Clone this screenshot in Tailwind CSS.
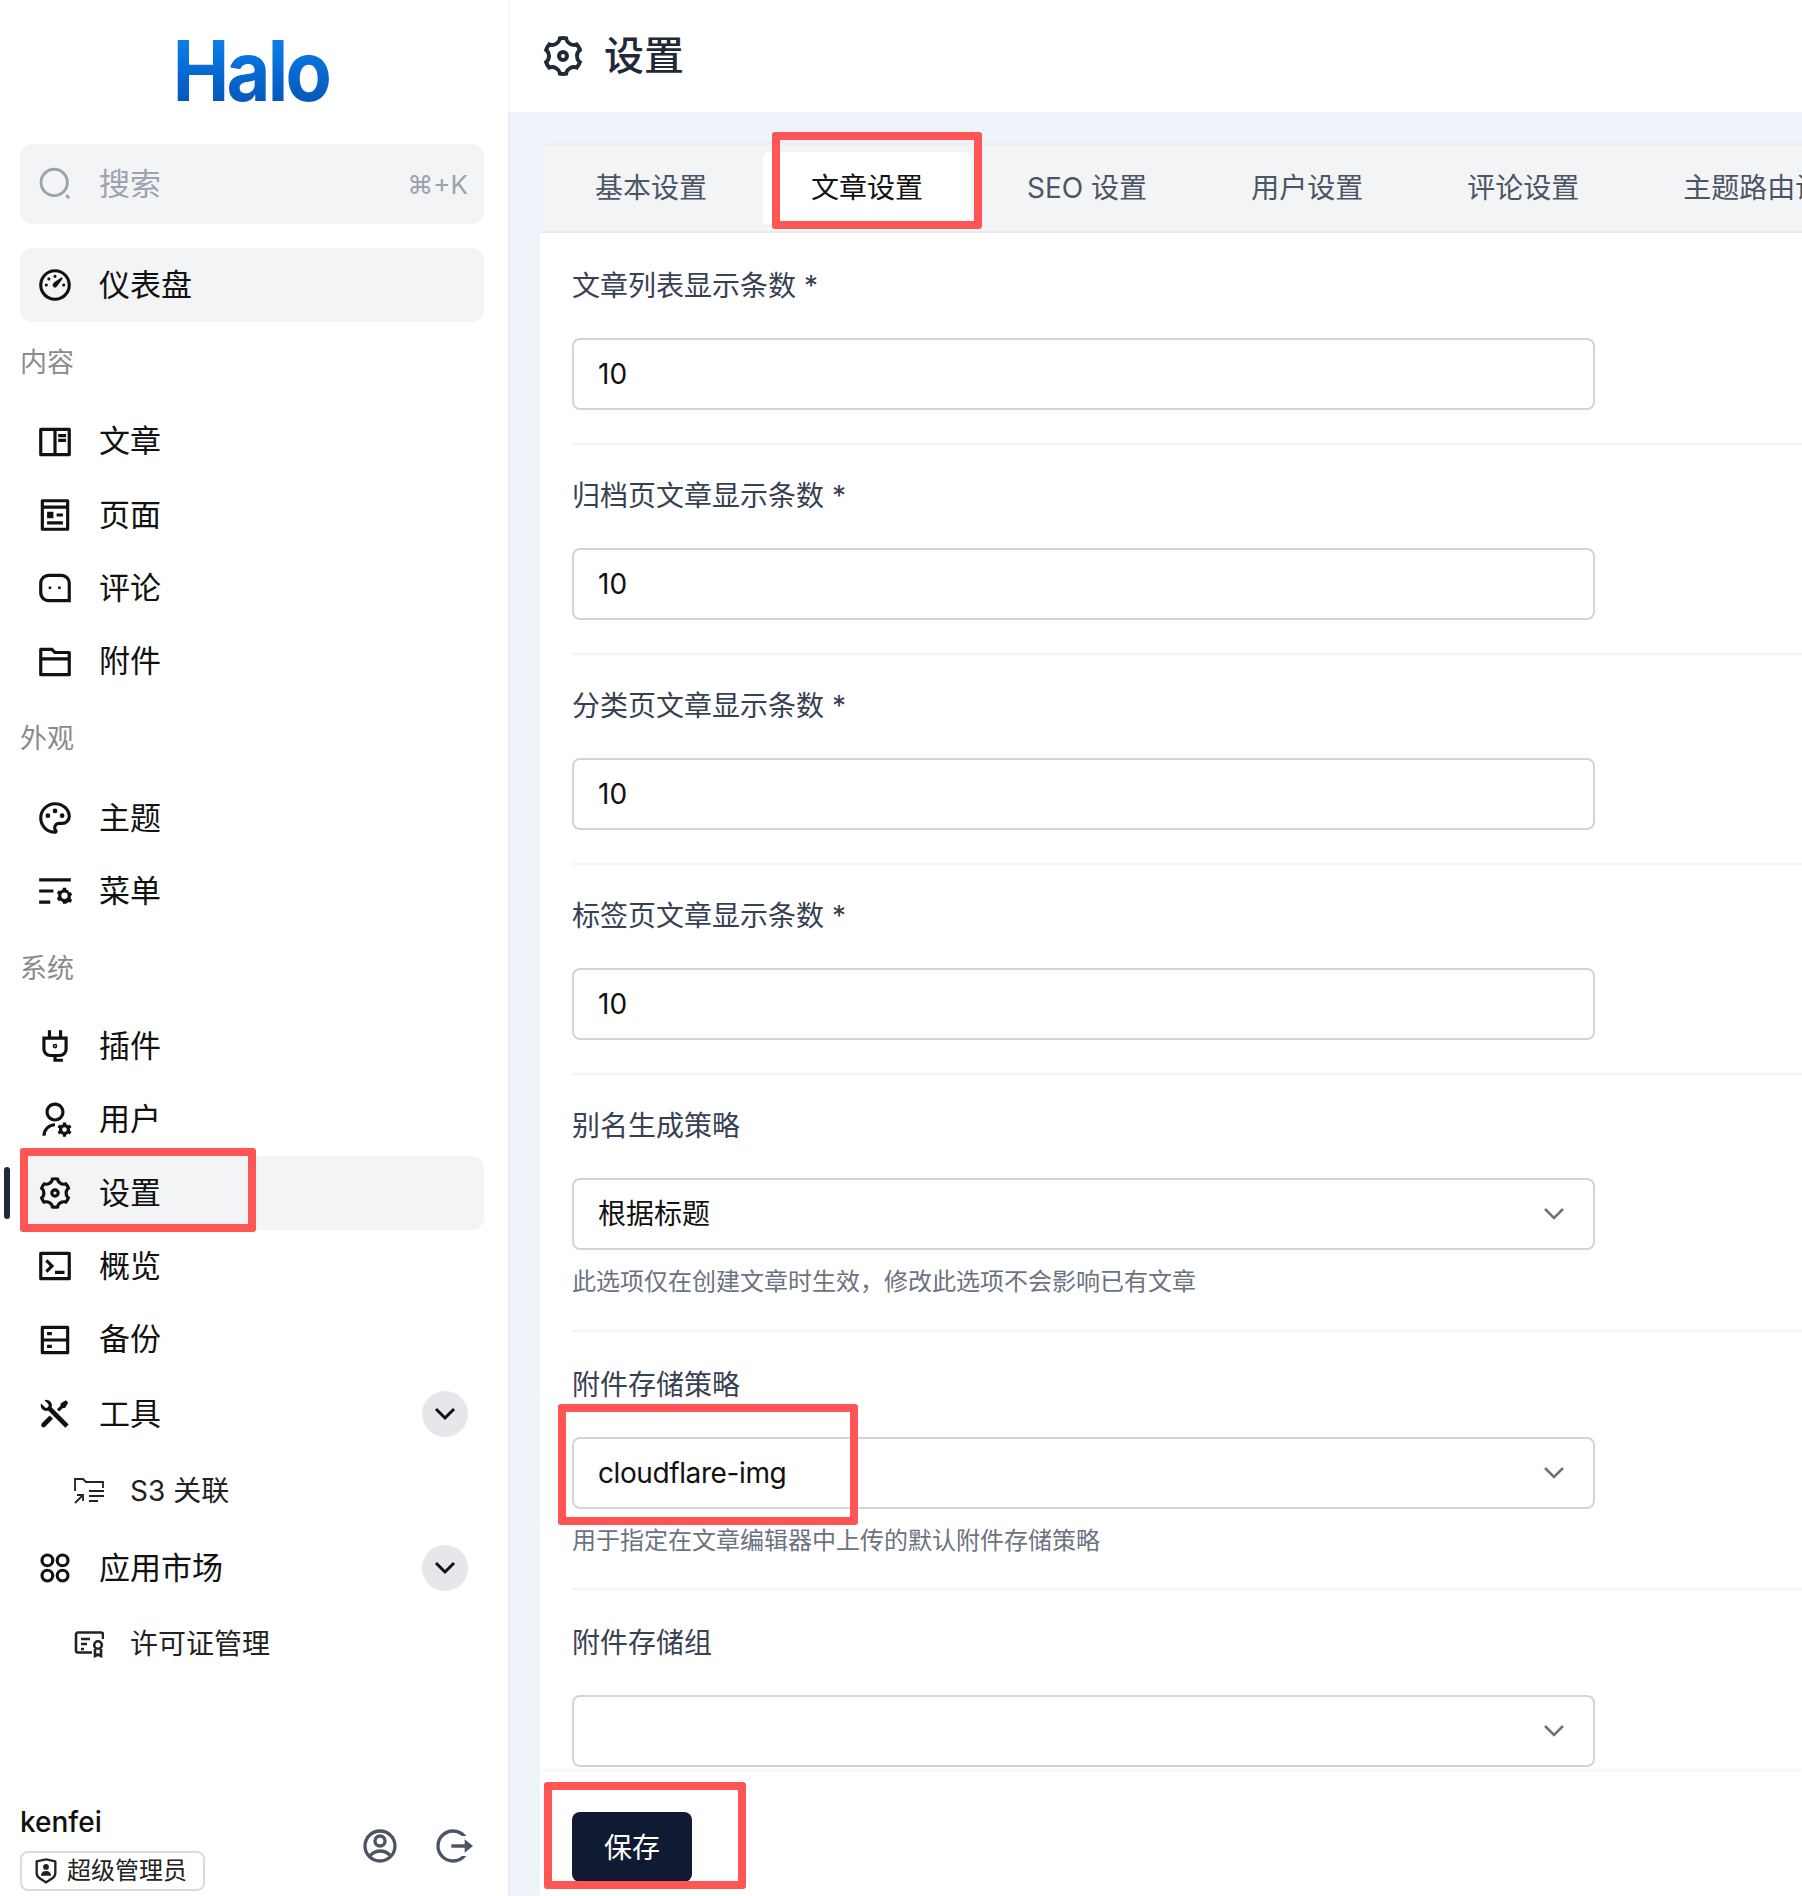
<!DOCTYPE html>
<html lang="zh-CN">
<head>
  <meta charset="UTF-8" />
  <title>设置 - Halo</title>
  <script src="https://cdn.jsdelivr.net/npm/@tailwindcss/browser@4"></script>
</head>
<body class="relative flex h-[1896px] w-[1802px] overflow-hidden bg-white font-[Inter,'Noto_Sans_CJK_SC','DejaVu_Sans',sans-serif] text-[#111]">

  <!-- Sidebar -->
  <aside class="relative z-10 flex w-[508px] shrink-0 flex-col bg-white shadow-[1px_0_3px_rgba(0,0,0,0.06)]">
    <div class="flex h-[144px] shrink-0 items-start justify-center pt-[25px] pr-[7px]">
      <span class="inline-block origin-center scale-x-[0.9] bg-linear-to-b from-[#0f86f8] to-[#0450ae] bg-clip-text text-[84px] leading-[92px] font-bold tracking-[-3px] text-transparent">Halo</span>
    </div>

    <div class="mr-6 ml-5 flex h-[80px] shrink-0 items-center gap-[25px] rounded-xl bg-[#f3f4f6] pr-4 pl-4 text-[31px] text-[#9ca3af]">
      <svg class="h-[38px] w-[38px] shrink-0" viewBox="0 0 24 24" fill="none" stroke="currentColor" stroke-width="1.8"><circle cx="11.5" cy="11" r="8.300"/><path d="M19 19l2 2"/></svg>
      <span>搜索</span>
      <span class="ml-auto text-[26px]">⌘+K</span>
    </div>

    <div class="mt-6 mr-6 ml-5 flex h-[74px] shrink-0 items-center gap-[25px] rounded-xl bg-[#f3f4f6] pl-4 text-[31px]">
      <svg class="h-[38px] w-[38px] shrink-0" viewBox="0 0 24 24" fill="currentColor"><path d="M12 2c5.523 0 10 4.477 10 10s-4.477 10-10 10S2 17.523 2 12 6.477 2 12 2zm0 2a8 8 0 1 0 0 16 8 8 0 0 0 0-16zm3.833 3.337a.596.596 0 0 1 .763.067.59.59 0 0 1 .063.76c-2.18 3.046-3.38 4.678-3.598 4.897a1.5 1.5 0 0 1-2.122-2.122c.374-.373 2.005-1.574 4.894-3.602zM17.5 11a1 1 0 1 1 0 2 1 1 0 0 1 0-2zm-11 0a1 1 0 1 1 0 2 1 1 0 0 1 0-2zm2.318-3.596a1 1 0 1 1-1.414 1.414 1 1 0 0 1 1.414-1.414zM12 5.5a1 1 0 1 1 0 2 1 1 0 0 1 0-2z"/></svg>
      <span>仪表盘</span>
    </div>

    <div class="flex h-[83px] shrink-0 items-center pl-5 text-[27px] text-[#8c8a8a]">内容</div>
    <div class="mr-6 ml-5 flex h-[73.3px] shrink-0 items-center gap-[25px] pl-4 text-[31px]">
      <svg class="h-[38px] w-[38px] shrink-0" viewBox="0 0 24 24" fill="currentColor"><path d="M2 3.993A1 1 0 0 1 2.992 3h18.016c.548 0 .992.445.992.993v16.014a1 1 0 0 1-.992.993H2.992A1 1 0 0 1 2 20.007V3.993zM11 5H4v14h7V5zm2 0v14h7V5h-7zm1 2h5v2h-5V7zm0 3h5v2h-5v-2z"/></svg>
      <span>文章</span>
    </div>
    <div class="mr-6 ml-5 flex h-[73.3px] shrink-0 items-center gap-[25px] pl-4 text-[31px]">
      <svg class="h-[38px] w-[38px] shrink-0" viewBox="0 0 24 24" fill="currentColor"><path d="M5 8v12h14V8H5zm0-2h14V4H5v2zm15 16H4a1 1 0 0 1-1-1V3a1 1 0 0 1 1-1h16a1 1 0 0 1 1 1v18a1 1 0 0 1-1 1zM7 10h4v4H7v-4zm0 6h10v2H7v-2zm6-5h4v2h-4v-2z"/></svg>
      <span>页面</span>
    </div>
    <div class="mr-6 ml-5 flex h-[73.3px] shrink-0 items-center gap-[25px] pl-4 text-[31px]">
      <svg class="h-[38px] w-[38px] shrink-0" viewBox="0 0 24 24" fill="currentColor"><path d="M2 8.994A5.99 5.99 0 0 1 8 3h8c3.313 0 6 2.695 6 5.994V21H8c-3.313 0-6-2.695-6-5.994V8.994zM20 19V8.994A4.004 4.004 0 0 0 16 5H8a3.99 3.99 0 0 0-4 3.994v6.012A4.004 4.004 0 0 0 8 19h12zm-6-8h1.600v1.600H14V11zm-6 0h1.600v1.600H8V11z"/></svg>
      <span>评论</span>
    </div>
    <div class="mr-6 ml-5 flex h-[73.3px] shrink-0 items-center gap-[25px] pl-4 text-[31px]">
      <svg class="h-[38px] w-[38px] shrink-0" viewBox="0 0 24 24" fill="currentColor" fill-rule="evenodd"><path d="M2 4a1 1 0 0 1 1-1h7.414l2 2H21a1 1 0 0 1 1 1v14a1 1 0 0 1-1 1H3a1 1 0 0 1-1-1V4zm2 1v4h16V7h-8.414l-2-2H4zm0 6v8h16v-8H4z"/></svg>
      <span>附件</span>
    </div>

    <div class="flex h-[83px] shrink-0 items-center pl-5 text-[27px] text-[#8c8a8a]">外观</div>
    <div class="mr-6 ml-5 flex h-[73.3px] shrink-0 items-center gap-[25px] pl-4 text-[31px]">
      <svg class="h-[38px] w-[38px] shrink-0" viewBox="0 0 24 24" fill="currentColor"><path d="M12 2c5.522 0 10 3.978 10 8.889a5.558 5.558 0 0 1-5.556 5.555h-1.966c-.922 0-1.667.745-1.667 1.667 0 .422.167.811.422 1.1.267.3.434.689.434 1.122C13.667 21.256 12.9 22 12 22 6.478 22 2 17.522 2 12S6.478 2 12 2zm-1.189 16.111a3.664 3.664 0 0 1 3.667-3.667h1.966A3.558 3.558 0 0 0 20 10.89C20 7.139 16.468 4 12 4a8 8 0 0 0-.676 15.972 3.648 3.648 0 0 1-.513-1.86zM7.5 12a1.5 1.5 0 1 1 0-3 1.5 1.5 0 0 1 0 3zm9 0a1.5 1.5 0 1 1 0-3 1.5 1.5 0 0 1 0 3zM12 9a1.5 1.5 0 1 1 0-3 1.5 1.5 0 0 1 0 3z"/></svg>
      <span>主题</span>
    </div>
    <div class="mr-6 ml-5 flex h-[73.3px] shrink-0 items-center gap-[25px] pl-4 text-[31px]">
      <svg class="h-[38px] w-[38px] shrink-0" viewBox="0 0 24 24" fill="currentColor"><path d="M2 18h7v2H2v-2zm0-7h9v2H2v-2zm0-7h20v2H2V4zm18.674 9.025l1.156-.391 1 1.732-.916.805a4.017 4.017 0 0 1 0 1.658l.916.805-1 1.732-1.156-.391c-.41.37-.898.655-1.435.83L19 20h-2l-.24-1.196a3.996 3.996 0 0 1-1.434-.83l-1.156.392-1-1.732.916-.805a4.017 4.017 0 0 1 0-1.658l-.916-.805 1-1.732 1.156.391c.41-.37.898-.655 1.435-.83L17 10h2l.24 1.196c.536.174 1.024.46 1.434.83zM18 17a2 2 0 1 0 0-4 2 2 0 0 0 0 4z"/></svg>
      <span>菜单</span>
    </div>

    <div class="flex h-[82px] shrink-0 items-center pl-5 text-[27px] text-[#8c8a8a]">系统</div>
    <div class="mr-6 ml-5 flex h-[73.3px] shrink-0 items-center gap-[25px] pl-4 text-[31px]">
      <svg class="h-[38px] w-[38px] shrink-0" viewBox="0 0 24 24" fill="none" stroke="currentColor" stroke-width="2"><path d="M8.500 2v5M15.500 2v5M4 7h16M5 7v7a4 4 0 0 0 4 4h6a4 4 0 0 0 4-4V7M12 18v3h5"/><circle cx="12" cy="12" r=".5"/></svg>
      <span>插件</span>
    </div>
    <div class="mr-6 ml-5 flex h-[73.3px] shrink-0 items-center gap-[25px] pl-4 text-[31px]">
      <svg class="h-[38px] w-[38px] shrink-0" viewBox="0 0 24 24" fill="currentColor"><path d="M12 14v2a6 6 0 0 0-6 6H4a8 8 0 0 1 8-8zm0-1c-3.315 0-6-2.685-6-6s2.685-6 6-6 6 2.685 6 6-2.685 6-6 6zm0-2c2.21 0 4-1.79 4-4s-1.79-4-4-4-4 1.79-4 4 1.79 4 4 4zm2.595 7.812a3.51 3.51 0 0 1 0-1.623l-.992-.573 1-1.732.992.573A3.496 3.496 0 0 1 17 14.645V13.5h2v1.145c.532.158 1.012.44 1.405.812l.992-.573 1 1.732-.992.573a3.51 3.51 0 0 1 0 1.622l.992.573-1 1.732-.992-.573a3.496 3.496 0 0 1-1.405.812V22.5h-2v-1.145a3.496 3.496 0 0 1-1.405-.812l-.992.573-1-1.732.992-.572zM18 19.5a1.5 1.5 0 1 0 0-3 1.5 1.5 0 0 0 0 3z"/></svg>
      <span>用户</span>
    </div>
    <div class="relative mr-6 ml-5 flex h-[73.3px] shrink-0 items-center gap-[25px] rounded-xl bg-[#f3f4f6] pl-4 text-[31px]">
      <span class="absolute top-[11px] -left-4 h-[52px] w-[6px] rounded-full bg-[#1e293b]"></span>
      <svg class="h-[38px] w-[38px] shrink-0" viewBox="0 0 24 24" fill="currentColor"><path d="M3.34 17a10.018 10.018 0 0 1-.978-2.326 3 3 0 0 0 .002-5.347A9.99 9.99 0 0 1 4.865 4.99a3 3 0 0 0 4.631-2.674 9.99 9.99 0 0 1 5.007.002 3 3 0 0 0 4.632 2.672c.579.59 1.093 1.261 1.525 2.01.433.749.757 1.53.978 2.326a3 3 0 0 0-.002 5.347 9.99 9.99 0 0 1-2.501 4.337 3 3 0 0 0-4.631 2.674 9.99 9.99 0 0 1-5.007-.002 3 3 0 0 0-4.632-2.672A10.018 10.018 0 0 1 3.34 17zm5.66.196a4.993 4.993 0 0 1 2.25 2.77c.499.047 1 .048 1.499.001A4.993 4.993 0 0 1 15 17.197a4.993 4.993 0 0 1 3.525-.565c.29-.408.54-.843.748-1.298A4.993 4.993 0 0 1 18 12c0-1.26.47-2.437 1.273-3.334a8.126 8.126 0 0 0-.75-1.298A4.993 4.993 0 0 1 15 6.804a4.993 4.993 0 0 1-2.25-2.77c-.499-.047-1-.048-1.499-.001A4.993 4.993 0 0 1 9 6.803a4.993 4.993 0 0 1-3.525.565 7.99 7.99 0 0 0-.748 1.298A4.993 4.993 0 0 1 6 12c0 1.26-.47 2.437-1.273 3.334a8.126 8.126 0 0 0 .75 1.298A4.993 4.993 0 0 1 9 17.196zM12 15a3 3 0 1 1 0-6 3 3 0 0 1 0 6zm0-2a1 1 0 1 0 0-2 1 1 0 0 0 0 2z"/></svg>
      <span>设置</span>
    </div>
    <div class="mr-6 ml-5 flex h-[73.3px] shrink-0 items-center gap-[25px] pl-4 text-[31px]">
      <svg class="h-[38px] w-[38px] shrink-0" viewBox="0 0 24 24" fill="currentColor"><path d="M3 3h18a1 1 0 0 1 1 1v16a1 1 0 0 1-1 1H3a1 1 0 0 1-1-1V4a1 1 0 0 1 1-1zm1 2v14h16V5H4zm8 10h6v2h-6v-2zm-3.333-3L5.838 9.172l1.415-1.415L11.495 12l-4.242 4.243-1.415-1.415L8.667 12z"/></svg>
      <span>概览</span>
    </div>
    <div class="mr-6 ml-5 flex h-[73.3px] shrink-0 items-center gap-[25px] pl-4 text-[31px]">
      <svg class="h-[38px] w-[38px] shrink-0" viewBox="0 0 24 24" fill="currentColor"><path d="M5 11h14V5H5v6zm16-7v16a1 1 0 0 1-1 1H4a1 1 0 0 1-1-1V4a1 1 0 0 1 1-1h16a1 1 0 0 1 1 1zm-2 9H5v6h14v-6zM7 15h3v2H7v-2zm0-8h3v2H7V7z"/></svg>
      <span>备份</span>
    </div>
    <div class="mr-6 ml-5 flex h-[76px] shrink-0 items-center gap-[25px] pl-4 text-[31px]">
      <svg class="h-[38px] w-[38px] shrink-0" viewBox="0 0 24 24" fill="currentColor"><path d="M5.33 3.271a3.5 3.5 0 0 1 4.472 4.474L20.647 18.59l-2.122 2.121L7.68 9.867a3.5 3.5 0 0 1-4.472-4.474L5.444 7.63a1.5 1.5 0 1 0 2.121-2.121L5.329 3.27zm10.367 1.884l3.182-1.768 1.414 1.414-1.768 3.182-1.768.354-2.12 2.121-1.415-1.414 2.121-2.121.354-1.768zm-7.071 7.778l2.121 2.122-4.95 4.95A1.5 1.5 0 0 1 3.58 17.99l.071-.07 4.95-4.95z"/></svg>
      <span>工具</span>
      <span class="mr-[16px] ml-auto flex h-[46px] w-[46px] items-center justify-center rounded-full bg-[#e5e7eb]">
        <svg class="h-[24px] w-[24px]" viewBox="0 0 24 24" fill="none" stroke="currentColor" stroke-width="3"><path d="M3 7l9 9 9-9"/></svg>
      </span>
    </div>
    <div class="mr-6 ml-5 flex h-[78px] shrink-0 items-center gap-[26px] pl-[54px] text-[28px] text-[#222]">
      <svg class="h-[28px] w-[30px] shrink-0" viewBox="0 0 30 28" fill="none" stroke="currentColor" stroke-width="1.8"><path d="M1 14V2h8l3 3h17v6M15 14h15M15 19h15M15 24h9M1 26l8-8M3 18h6v6"/></svg>
      <span>S3 关联</span>
    </div>
    <div class="mr-6 ml-5 flex h-[75px] shrink-0 items-center gap-[25px] pl-4 text-[31px]">
      <svg class="h-[38px] w-[38px] shrink-0" viewBox="0 0 24 24" fill="none" stroke="currentColor" stroke-width="2"><circle cx="7.200" cy="7.200" r="3.400"/><circle cx="16.800" cy="7.200" r="3.400"/><circle cx="7.200" cy="16.800" r="3.400"/><circle cx="16.800" cy="16.800" r="3.400"/></svg>
      <span>应用市场</span>
      <span class="mr-[16px] ml-auto flex h-[46px] w-[46px] items-center justify-center rounded-full bg-[#e5e7eb]">
        <svg class="h-[24px] w-[24px]" viewBox="0 0 24 24" fill="none" stroke="currentColor" stroke-width="3"><path d="M3 7l9 9 9-9"/></svg>
      </span>
    </div>
    <div class="mr-6 ml-5 flex h-[78px] shrink-0 items-center gap-[26px] pl-[54px] text-[28px] text-[#222]">
      <svg class="h-[28px] w-[30px] shrink-0" viewBox="0 0 30 28" fill="none" stroke="currentColor" stroke-width="2.6"><path d="M29 9V4.500a2 2 0 0 0-2-2H4a2 2 0 0 0-2 2v16a2 2 0 0 0 2 2h14M7 9h9M7 14h6M7 19h3"/><circle cx="24" cy="15" r="3.800"/><path d="M21 19v7l3-1.500 3 1.500v-7"/></svg>
      <span>许可证管理</span>
    </div>

    <div class="mt-auto flex items-end justify-between px-5 pb-[5px]">
      <div>
        <div class="text-[28px] leading-[36px] font-medium">kenfei</div>
        <div class="mt-[11px] flex h-[40px] w-[185px] items-center gap-[7px] rounded-lg border-2 border-[#d9dbdf] pl-[10px] text-[24px] text-[#222]">
          <svg class="h-[28px] w-[28px] shrink-0" viewBox="0 0 24 24" fill="currentColor"><path d="M3.783 2.826L12 1l8.217 1.826a1 1 0 0 1 .783.976v9.987a6 6 0 0 1-2.672 4.992L12 23l-6.328-4.219A6 6 0 0 1 3 13.79V3.802a1 1 0 0 1 .783-.976zM5 4.604v9.185a4 4 0 0 0 1.781 3.328L12 20.597l5.219-3.48A4 4 0 0 0 19 13.79V4.604L12 3.05 5 4.604zM12 11a2.5 2.5 0 1 1 0-5 2.5 2.5 0 0 1 0 5zm-4.473 5a4.5 4.5 0 0 1 8.946 0H7.527z"/></svg>
          <span>超级管理员</span>
        </div>
      </div>
      <div class="mr-[15px] mb-[25px] flex gap-[33px] text-[#4b5563]">
        <svg class="h-[40px] w-[40px]" viewBox="0 0 24 24" fill="currentColor"><path d="M12 22C6.477 22 2 17.523 2 12S6.477 2 12 2s10 4.477 10 10-4.477 10-10 10zm-4.987-3.744A7.966 7.966 0 0 0 12 20c1.97 0 3.773-.712 5.167-1.892A6.979 6.979 0 0 0 12.16 16a6.981 6.981 0 0 0-5.147 2.256zM5.616 16.820A8.975 8.975 0 0 1 12.160 14a8.972 8.972 0 0 1 6.362 2.634 8 8 0 1 0-12.906.187zM12 13a4 4 0 1 1 0-8 4 4 0 0 1 0 8zm0-2a2 2 0 1 0 0-4 2 2 0 0 0 0 4z"/></svg>
        <svg class="h-[40px] w-[40px]" viewBox="0 0 24 24" fill="currentColor"><path d="M19 11h-8v2h8v3l5-4-5-4v3zm1 7h-2.708a8 8 0 1 1 0-12H20A9.985 9.985 0 0 0 12 2C6.477 2 2 6.477 2 12s4.477 10 10 10a9.985 9.985 0 0 0 8-4z"/></svg>
      </div>
    </div>
  </aside>

  <!-- Main -->
  <main class="flex min-w-0 flex-1 flex-col bg-[#eff4fb]">
    <header class="flex h-[112px] shrink-0 items-center gap-[17px] bg-white pl-[31px] text-[#1f2937]">
      <svg class="h-[48px] w-[48px] shrink-0" viewBox="0 0 24 24" fill="currentColor"><path d="M3.34 17a10.018 10.018 0 0 1-.978-2.326 3 3 0 0 0 .002-5.347A9.99 9.99 0 0 1 4.865 4.99a3 3 0 0 0 4.631-2.674 9.99 9.99 0 0 1 5.007.002 3 3 0 0 0 4.632 2.672c.579.59 1.093 1.261 1.525 2.01.433.749.757 1.53.978 2.326a3 3 0 0 0-.002 5.347 9.99 9.99 0 0 1-2.501 4.337 3 3 0 0 0-4.631 2.674 9.99 9.99 0 0 1-5.007-.002 3 3 0 0 0-4.632-2.672A10.018 10.018 0 0 1 3.34 17zm5.66.196a4.993 4.993 0 0 1 2.25 2.77c.499.047 1 .048 1.499.001A4.993 4.993 0 0 1 15 17.197a4.993 4.993 0 0 1 3.525-.565c.29-.408.54-.843.748-1.298A4.993 4.993 0 0 1 18 12c0-1.26.47-2.437 1.273-3.334a8.126 8.126 0 0 0-.75-1.298A4.993 4.993 0 0 1 15 6.804a4.993 4.993 0 0 1-2.25-2.77c-.499-.047-1-.048-1.499-.001A4.993 4.993 0 0 1 9 6.803a4.993 4.993 0 0 1-3.525.565 7.99 7.99 0 0 0-.748 1.298A4.993 4.993 0 0 1 6 12c0 1.26-.47 2.437-1.273 3.334a8.126 8.126 0 0 0 .75 1.298A4.993 4.993 0 0 1 9 17.196zM12 15a3 3 0 1 1 0-6 3 3 0 0 1 0 6zm0-2a1 1 0 1 0 0-2 1 1 0 0 0 0 2z"/></svg>
      <h1 class="text-[40px] font-medium">设置</h1>
    </header>

    <div class="mt-[31px] ml-[32px] flex min-h-0 flex-1 flex-col overflow-hidden rounded-tl-lg bg-white">
      <!-- Tabs -->
      <div class="flex h-[90px] shrink-0 items-end gap-2 border-t-2 border-b-2 border-t-[#ecedf0] border-b-[#e9eaec] bg-[#f3f4f6] pb-[7px] pl-[7px] whitespace-nowrap text-[28px] text-[#4b5563]">
        <div class="flex h-[72px] items-center px-12">基本设置</div>
        <div class="flex h-[72px] items-center rounded-t-md bg-white px-12 text-[#111]">文章设置</div>
        <div class="flex h-[72px] items-center px-12">SEO 设置</div>
        <div class="flex h-[72px] items-center px-12">用户设置</div>
        <div class="flex h-[72px] items-center px-12">评论设置</div>
        <div class="flex h-[72px] items-center px-12">主题路由设置</div>
      </div>

      <!-- Form -->
      <div class="min-h-0 flex-1 overflow-hidden pt-[2px] pl-[32px] text-[28px]">
        <div class="border-b-2 border-[#f3f4f6] pt-[31px] pb-[33px]">
          <div class="mb-[32px] h-[40px] leading-[40px] text-[#374151]">文章列表显示条数 *</div>
          <div class="flex h-[72px] w-[1023px] items-center rounded-lg border-2 border-[#d1d5db] pl-[24px]">10</div>
        </div>
        <div class="border-b-2 border-[#f3f4f6] pt-[31px] pb-[33px]">
          <div class="mb-[32px] h-[40px] leading-[40px] text-[#374151]">归档页文章显示条数 *</div>
          <div class="flex h-[72px] w-[1023px] items-center rounded-lg border-2 border-[#d1d5db] pl-[24px]">10</div>
        </div>
        <div class="border-b-2 border-[#f3f4f6] pt-[31px] pb-[33px]">
          <div class="mb-[32px] h-[40px] leading-[40px] text-[#374151]">分类页文章显示条数 *</div>
          <div class="flex h-[72px] w-[1023px] items-center rounded-lg border-2 border-[#d1d5db] pl-[24px]">10</div>
        </div>
        <div class="border-b-2 border-[#f3f4f6] pt-[31px] pb-[33px]">
          <div class="mb-[32px] h-[40px] leading-[40px] text-[#374151]">标签页文章显示条数 *</div>
          <div class="flex h-[72px] w-[1023px] items-center rounded-lg border-2 border-[#d1d5db] pl-[24px]">10</div>
        </div>
        <div class="border-b-2 border-[#f3f4f6] pt-[31px] pb-[30px]">
          <div class="mb-[32px] h-[40px] leading-[40px] text-[#374151]">别名生成策略</div>
          <div class="flex h-[72px] w-[1023px] items-center justify-between rounded-lg border-2 border-[#d1d5db] pr-[28px] pl-[24px]">
            <span>根据标题</span>
            <svg class="h-[14px] w-[22px] text-[#6b7280]" viewBox="0 0 22 14" fill="none" stroke="currentColor" stroke-width="2.6"><path d="M2 2l9 9 9-9"/></svg>
          </div>
          <div class="mt-[14px] h-[36px] text-[24px] leading-[36px] text-[#6b7280]">此选项仅在创建文章时生效，修改此选项不会影响已有文章</div>
        </div>
        <div class="border-b-2 border-[#f3f4f6] pt-[33px] pb-[29px]">
          <div class="mb-[32px] h-[40px] leading-[40px] text-[#374151]">附件存储策略</div>
          <div class="flex h-[72px] w-[1023px] items-center justify-between rounded-lg border-2 border-[#d1d5db] pr-[28px] pl-[24px]">
            <span class="tracking-[-0.4px]">cloudflare-img</span>
            <svg class="h-[14px] w-[22px] text-[#6b7280]" viewBox="0 0 22 14" fill="none" stroke="currentColor" stroke-width="2.6"><path d="M2 2l9 9 9-9"/></svg>
          </div>
          <div class="mt-[14px] h-[36px] text-[24px] leading-[36px] text-[#6b7280]">用于指定在文章编辑器中上传的默认附件存储策略</div>
        </div>
        <div class="pt-[33px]">
          <div class="mb-[32px] h-[40px] leading-[40px] text-[#374151]">附件存储组</div>
          <div class="flex h-[72px] w-[1023px] items-center justify-end rounded-lg border-2 border-[#d1d5db] pr-[28px] pl-[24px]">
            <svg class="h-[14px] w-[22px] text-[#6b7280]" viewBox="0 0 22 14" fill="none" stroke="currentColor" stroke-width="2.6"><path d="M2 2l9 9 9-9"/></svg>
          </div>
        </div>
      </div>

      <!-- Save bar -->
      <div class="flex h-[124px] shrink-0 items-start rounded-tl-lg bg-white pt-[40px] pl-[32px] shadow-[0_-2px_6px_rgba(0,0,0,0.05)]">
        <button class="h-[70px] w-[120px] rounded-lg bg-[#101a33] pt-[2px] text-[28px] text-white">保存</button>
      </div>
    </div>
  </main>

  <!-- Red annotation boxes drawn over the screenshot -->
  <div class="absolute top-[1148px] left-[20px] z-20 h-[84px] w-[236px] rounded-[3px] border-8 border-[#ff5555]"></div>
  <div class="absolute top-[132px] left-[772px] z-20 h-[97px] w-[210px] rounded-[3px] border-8 border-[#ff5555]"></div>
  <div class="absolute top-[1404px] left-[558px] z-20 h-[121px] w-[300px] rounded-[3px] border-8 border-[#ff5555]"></div>
  <div class="absolute top-[1782px] left-[544px] z-20 h-[107px] w-[202px] rounded-[3px] border-8 border-[#ff5555]"></div>
</body>
</html>
